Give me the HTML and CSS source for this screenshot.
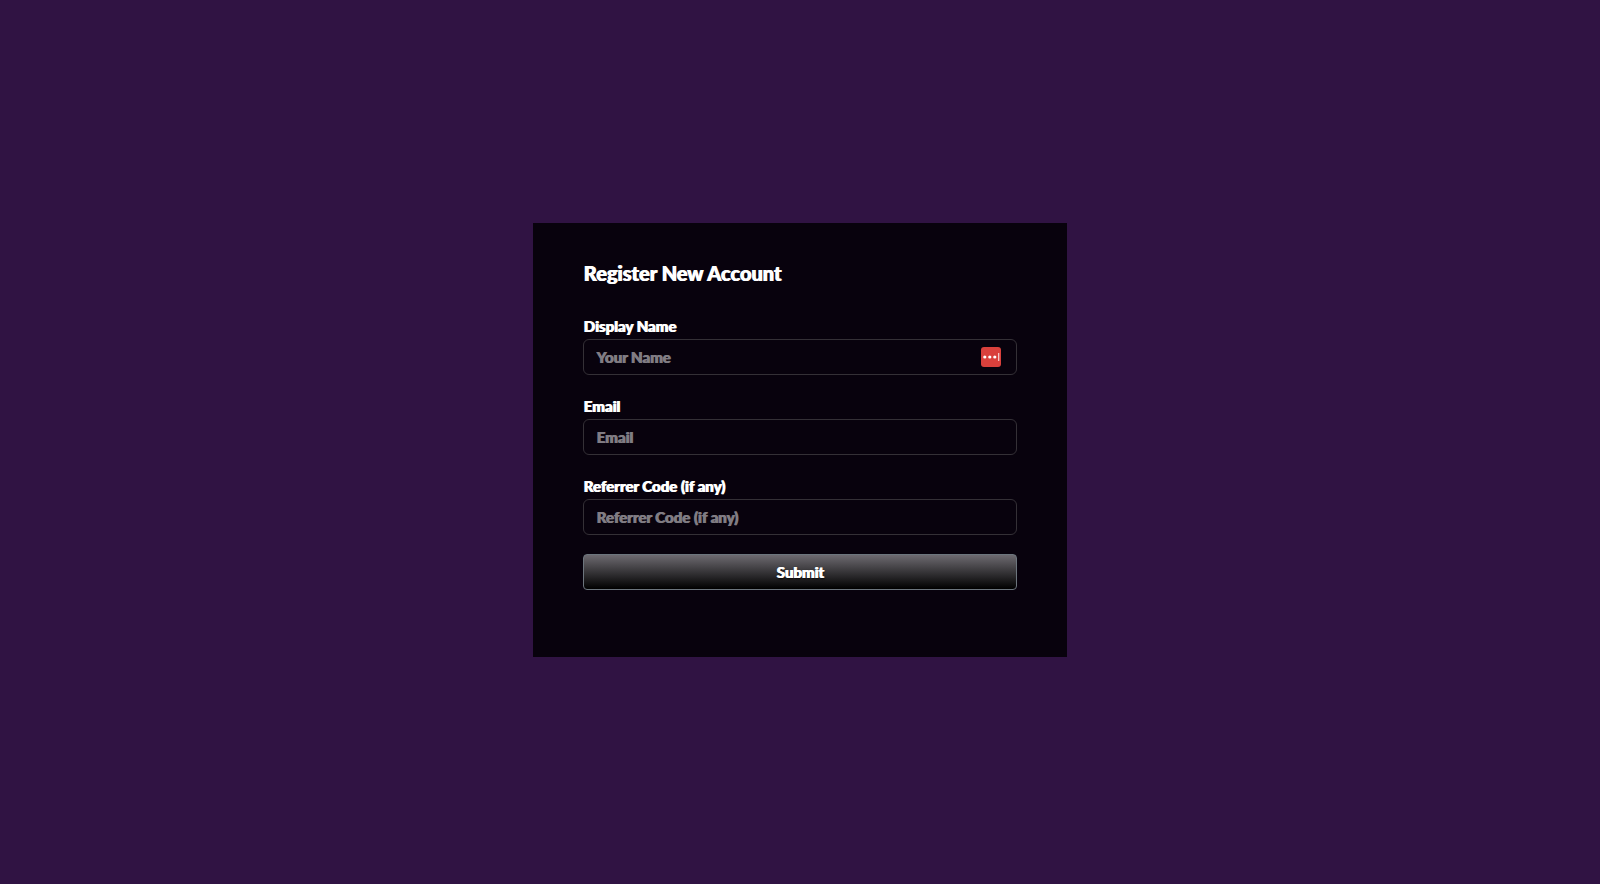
FILE: index.html
```html
<!DOCTYPE html>
<html lang="en">
<head>
  <meta charset="UTF-8" />
  <meta name="viewport" content="width=device-width, initial-scale=1.0" />
  <title>Register New Account</title>
  <link rel="stylesheet" href="styles.css">
</head>
<body>
  <main class="register">
    <h1>Register New Account</h1>
    <form>
      <div class="field">
        <label for="displayName">Display Name</label>
        <div class="input-wrap">
          <input type="text" id="displayName" name="displayName" placeholder="Your Name" />
          <button type="button" class="fill-btn" aria-label="Fill from password manager">
            <svg width="20" height="20" viewBox="0 0 20 20">
              <rect width="20" height="20" rx="3" fill="#d9403c" />
              <circle cx="3.8" cy="10" r="1.6" fill="#fff" />
              <circle cx="8.8" cy="10" r="1.6" fill="#fff" />
              <circle cx="13.8" cy="10" r="1.6" fill="#fff" />
              <rect x="17" y="6" width="1.3" height="8" fill="#f3c5c4" />
            </svg>
          </button>
        </div>
      </div>
      <div class="field">
        <label for="email">Email</label>
        <input type="email" id="email" name="email" placeholder="Email" />
      </div>
      <div class="field">
        <label for="referrer">Referrer Code (if any)</label>
        <input type="text" id="referrer" name="referrer" placeholder="Referrer Code (if any)" />
      </div>
      <button type="submit" class="submit-btn">Submit</button>
    </form>
  </main>
</body>
</html>
```
FILE: styles.css
```css
* {
  box-sizing: border-box;
}
body {
  background: #301343;
  color: #fff;
  font-family: Lato, sans-serif;
  font-weight: 900;
  text-shadow: 1px 0 #fff;
  margin: 0;
  padding-bottom: 5px;
  min-height: 100vh;
  display: flex;
  align-items: center;
  justify-content: center;
}
.register {
  width: 33.33%;
  min-width: 320px;
  background: #08020d;
  padding: 36px 50px 67px;
}
h1 {
  margin: 0 0 30px;
  font-size: 20px;
  line-height: 28px;
  font-weight: 900;
}
.field {
  margin-bottom: 19px;
}
.field + .field {
  margin-top: 22px;
}
label {
  display: block;
  margin-bottom: 4px;
  font-size: 15px;
  line-height: 18px;
}
input {
  display: block;
  width: 100%;
  height: 36px;
  padding: 0 12px;
  background: transparent;
  border: 1px solid #343036;
  border-radius: 6px;
  color: #fff;
  font: inherit;
  font-size: 15px;
}
input::placeholder {
  color: #807c83;
  text-shadow: 1px 0 #807c83;
  opacity: 1;
}
.input-wrap {
  position: relative;
}
.fill-btn {
  position: absolute;
  top: 8px;
  right: 16px;
  padding: 0;
  border: none;
  background: none;
  cursor: pointer;
}
.fill-btn svg {
  display: block;
}
.submit-btn {
  display: block;
  width: 100%;
  height: 36px;
  background: linear-gradient(#6d6a70, #000);
  border: 1px solid #6c757d;
  border-radius: 4px;
  color: #fff;
  font: inherit;
  font-size: 15px;
  text-shadow: 1px 0 #fff, 1px 1px 2px #000;
  cursor: pointer;
}
```
